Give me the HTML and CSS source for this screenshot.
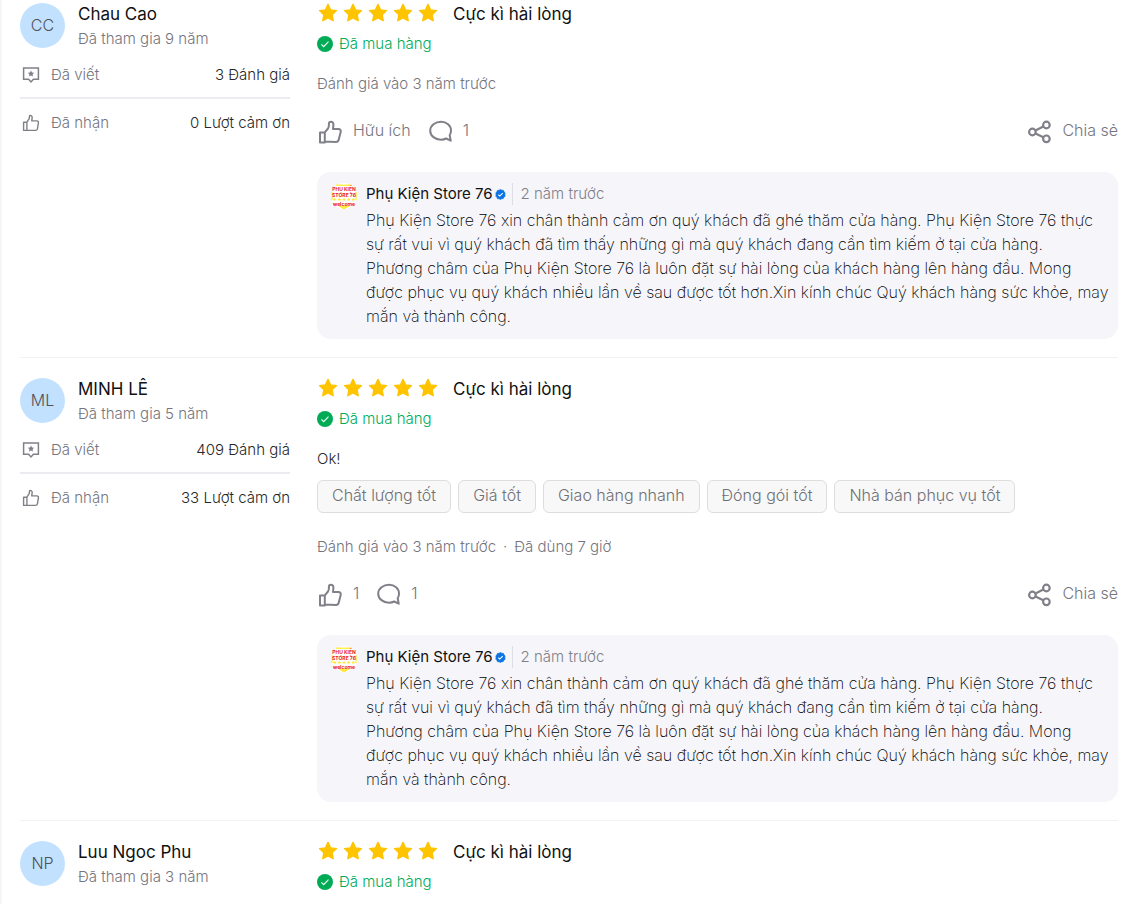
FILE: index.html
```
<!DOCTYPE html>
<html lang="vi">
<head>
    <meta charset="UTF-8">
    <meta name="viewport" content="width=device-width, initial-scale=1.0">
    <title>Đánh giá sản phẩm</title>
    <link rel="stylesheet" href="styles.css">
</head>
<body>
    <!-- Shared icons -->
    <svg class="sprite" aria-hidden="true">
        <symbol id="icon-star" viewBox="0 0 20 20">
            <path d="M10 1.4l2.5 5.5 6 .7-4.4 4.1 1.1 6-5.2-2.9-5.2 2.9 1.1-6-4.4-4.1 6-.7z" fill="#ffc400" stroke="#ffc400" stroke-width="1.4" stroke-linejoin="round"/>
        </symbol>
        <symbol id="icon-bought" viewBox="0 0 16 16">
            <circle cx="8" cy="8" r="8" fill="#00ab56"/>
            <path d="M4.4 8.4l2.3 2.2 4.8-5" fill="none" stroke="#fff" stroke-width="1.1"/>
        </symbol>
        <symbol id="icon-written" viewBox="0 0 18 18">
            <path d="M1.6 2.1h14.8v11.2h-5l-2.4 2.6-2.4-2.6h-5z" fill="none" stroke="#808089" stroke-width="1.5"/>
            <path d="M9 4.5l1 2 2.2.3-1.6 1.5.4 2.3L9 9.5l-2 1.1.4-2.3-1.6-1.5 2.2-.3z" fill="#808089"/>
        </symbol>
        <symbol id="icon-thanks" viewBox="0 0 18 18">
            <path d="M1.6 8.2h3.3v8.2H1.6zM4.9 8.2l2.3-3.5.4-3.1c1.6-.4 2.7.7 2.6 2.1l-.5 3.2h5.2c1.1 0 1.7.9 1.5 1.9l-1 6c-.2 1-.8 1.6-1.8 1.6H4.9" fill="none" stroke="#808089" stroke-width="1.4" stroke-linejoin="round"/>
        </symbol>
        <symbol id="icon-like" viewBox="0 0 27 27">
            <path d="M3 14.4h4.8v10H3zM7.8 14.4l3.2-3.9c.7-.9.9-1.9.9-3.3V5.8c0-1.3.9-2 2-2 1.7 0 2.7 1.4 2.5 3.2L16 11h5.5c1.7 0 2.6 1.2 2.2 2.9l-2 7.9c-.4 1.5-1.3 2.3-2.9 2.2l-11-.4" fill="none" stroke="#808089" stroke-width="2" stroke-linejoin="round"/>
        </symbol>
        <symbol id="icon-comment" viewBox="0 0 27 27">
            <path d="M22.7 17.3A9 9 0 0 0 24 12.7C24 7.5 19.6 3.8 14 3.8S3.2 7.5 3.2 12.7 8.3 21.7 14 21.7c2 0 3.7-.4 5.2-1.2l4.5 2.2z" fill="none" stroke="#808089" stroke-width="2" stroke-linejoin="round"/>
        </symbol>
        <symbol id="icon-share" viewBox="0 0 27 27">
            <g fill="none" stroke="#808089" stroke-width="2.2">
                <circle cx="6.4" cy="14" r="3.3"/>
                <circle cx="20.4" cy="7" r="3.3"/>
                <circle cx="20.4" cy="20.8" r="3.3"/>
                <path d="M9.5 12.4l7.8-3.8M9.5 15.6l7.8 3.7"/>
            </g>
        </symbol>
        <symbol id="icon-verified" viewBox="0 0 12 12">
            <path d="M6 .6l1.5.8 1.7.1.7 1.6 1.1 1.3-.3 1.7.3 1.7-1.3 1.1-.7 1.5-1.7.2-1.3.9-1.5-.8-1.8-.2-.6-1.5L.9 7.8l.3-1.7-.3-1.7L2 3.1l.7-1.6 1.7-.1z" fill="#0b74e5" stroke="#0b74e5" stroke-width=".8" stroke-linejoin="round"/>
            <path d="M3.7 6.3l1.5 1.4L8.4 4.6" fill="none" stroke="#fff" stroke-width="1.2"/>
        </symbol>
        <symbol id="logo-store" viewBox="0 0 26 26">
            <circle cx="13" cy="13" r="13" fill="#fff"/>
            <path d="M5 2.3h16M1 9v8M25 9v8" stroke="#fff04a" stroke-width="1.4"/>
            <path d="M2.5 17l1.3-1.5L5.1 17zM7 17l1.3-1.5L9.6 17zM11.7 17l1.3-1.5 1.3 1.5zM16.4 17l1.3-1.5L19 17zM20.9 17l1.3-1.5 1.3 1.5zM8 23h10l-5 3z" fill="#ffe93b" stroke="#ffe93b"/>
            <g class="logo-text">
                <text x="13" y="7.5">PHỤ KIỆN</text>
                <text x="13" y="14">STORE 76</text>
                <text x="13" y="22.5">welcome</text>
            </g>
        </symbol>
    </svg>

    <main class="reviews">
        <article class="review">
            <aside class="reviewer">
                <div class="reviewer-head">
                    <div class="avatar">CC</div>
                    <div>
                        <div class="reviewer-name">Chau Cao</div>
                        <div class="reviewer-date">Đã tham gia 9 năm</div>
                    </div>
                </div>
                <div class="reviewer-info">
                    <svg class="info-icon"><use href="#icon-written"/></svg>
                    <span>Đã viết</span>
                    <span class="info-value">3 Đánh giá</span>
                </div>
                <div class="reviewer-info">
                    <svg class="info-icon"><use href="#icon-thanks"/></svg>
                    <span>Đã nhận</span>
                    <span class="info-value">0 Lượt cảm ơn</span>
                </div>
            </aside>
            <div class="review-body">
                <div class="rating">
                    <div class="stars" role="img" aria-label="5 sao">
                        <svg><use href="#icon-star"/></svg>
                        <svg><use href="#icon-star"/></svg>
                        <svg><use href="#icon-star"/></svg>
                        <svg><use href="#icon-star"/></svg>
                        <svg><use href="#icon-star"/></svg>
                    </div>
                    <div class="rating-title">Cực kì hài lòng</div>
                </div>
                <div class="bought"><svg><use href="#icon-bought"/></svg>Đã mua hàng</div>
                <div class="created">Đánh giá vào 3 năm trước</div>
                <div class="actions">
                    <button type="button" class="action"><svg><use href="#icon-like"/></svg>Hữu ích</button>
                    <button type="button" class="action"><svg><use href="#icon-comment"/></svg>1</button>
                    <button type="button" class="action share"><svg><use href="#icon-share"/></svg>Chia sẻ</button>
                </div>
                <div class="reply">
                    <svg class="store-logo"><use href="#logo-store"/></svg>
                    <div class="reply-main">
                        <div class="reply-head">
                            <span class="store-name">Phụ Kiện Store 76</span>
                            <svg class="verified"><use href="#icon-verified"/></svg>
                            <span class="reply-date">2 năm trước</span>
                        </div>
                        <p class="reply-text">Phụ Kiện Store 76 xin chân thành cảm ơn quý khách đã ghé thăm cửa hàng. Phụ Kiện Store 76 thực sự rất vui vì quý khách đã tìm thấy những gì mà quý khách đang cần tìm kiếm ở tại cửa hàng.<br>Phương châm của Phụ Kiện Store 76 là luôn đặt sự hài lòng của khách hàng lên hàng đầu. Mong được phục vụ quý khách nhiều lần về sau được tốt hơn.Xin kính chúc Quý khách hàng sức khỏe, may mắn và thành công.</p>
                    </div>
                </div>
            </div>
        </article>

        <article class="review">
            <aside class="reviewer">
                <div class="reviewer-head">
                    <div class="avatar">ML</div>
                    <div>
                        <div class="reviewer-name">MINH LÊ</div>
                        <div class="reviewer-date">Đã tham gia 5 năm</div>
                    </div>
                </div>
                <div class="reviewer-info">
                    <svg class="info-icon"><use href="#icon-written"/></svg>
                    <span>Đã viết</span>
                    <span class="info-value">409 Đánh giá</span>
                </div>
                <div class="reviewer-info">
                    <svg class="info-icon"><use href="#icon-thanks"/></svg>
                    <span>Đã nhận</span>
                    <span class="info-value">33 Lượt cảm ơn</span>
                </div>
            </aside>
            <div class="review-body">
                <div class="rating">
                    <div class="stars" role="img" aria-label="5 sao">
                        <svg><use href="#icon-star"/></svg>
                        <svg><use href="#icon-star"/></svg>
                        <svg><use href="#icon-star"/></svg>
                        <svg><use href="#icon-star"/></svg>
                        <svg><use href="#icon-star"/></svg>
                    </div>
                    <div class="rating-title">Cực kì hài lòng</div>
                </div>
                <div class="bought"><svg><use href="#icon-bought"/></svg>Đã mua hàng</div>
                <p class="content">Ok!</p>
                <div class="tags">
                    <span class="tag">Chất lượng tốt</span>
                    <span class="tag">Giá tốt</span>
                    <span class="tag">Giao hàng nhanh</span>
                    <span class="tag">Đóng gói tốt</span>
                    <span class="tag">Nhà bán phục vụ tốt</span>
                </div>
                <div class="created">Đánh giá vào 3 năm trước<span class="dot">·</span>Đã dùng 7 giờ</div>
                <div class="actions">
                    <button type="button" class="action"><svg><use href="#icon-like"/></svg>1</button>
                    <button type="button" class="action"><svg><use href="#icon-comment"/></svg>1</button>
                    <button type="button" class="action share"><svg><use href="#icon-share"/></svg>Chia sẻ</button>
                </div>
                <div class="reply">
                    <svg class="store-logo"><use href="#logo-store"/></svg>
                    <div class="reply-main">
                        <div class="reply-head">
                            <span class="store-name">Phụ Kiện Store 76</span>
                            <svg class="verified"><use href="#icon-verified"/></svg>
                            <span class="reply-date">2 năm trước</span>
                        </div>
                        <p class="reply-text">Phụ Kiện Store 76 xin chân thành cảm ơn quý khách đã ghé thăm cửa hàng. Phụ Kiện Store 76 thực sự rất vui vì quý khách đã tìm thấy những gì mà quý khách đang cần tìm kiếm ở tại cửa hàng.<br>Phương châm của Phụ Kiện Store 76 là luôn đặt sự hài lòng của khách hàng lên hàng đầu. Mong được phục vụ quý khách nhiều lần về sau được tốt hơn.Xin kính chúc Quý khách hàng sức khỏe, may mắn và thành công.</p>
                    </div>
                </div>
            </div>
        </article>

        <article class="review">
            <aside class="reviewer">
                <div class="reviewer-head">
                    <div class="avatar">NP</div>
                    <div>
                        <div class="reviewer-name">Luu Ngoc Phu</div>
                        <div class="reviewer-date">Đã tham gia 3 năm</div>
                    </div>
                </div>
            </aside>
            <div class="review-body">
                <div class="rating">
                    <div class="stars" role="img" aria-label="5 sao">
                        <svg><use href="#icon-star"/></svg>
                        <svg><use href="#icon-star"/></svg>
                        <svg><use href="#icon-star"/></svg>
                        <svg><use href="#icon-star"/></svg>
                        <svg><use href="#icon-star"/></svg>
                    </div>
                    <div class="rating-title">Cực kì hài lòng</div>
                </div>
                <div class="bought"><svg><use href="#icon-bought"/></svg>Đã mua hàng</div>
            </div>
        </article>
    </main>
</body>
</html>
```
FILE: styles.css
```
* {
    box-sizing: border-box;
}
body {
    margin: 0;
    font-family: Inter, "Liberation Sans", sans-serif;
    font-size: 15px;
    font-weight: 300;
    line-height: 24px;
    color: #27272a;
    background: #fff;
}
p {
    margin: 0;
}
svg {
    display: block;
    flex-shrink: 0;
}
.sprite {
    display: none;
}
.reviews {
    min-height: 100vh;
    padding: 2px 17px 0 18px;
    border-left: 2px solid #f5f5fa;
}
.review {
    display: grid;
    grid-template-columns: 270px 1fr;
    column-gap: 27px;
    padding-bottom: 18px;
}
.review + .review {
    padding-top: 19px;
    border-top: 1px solid #f2f2f2;
}
.review:last-child {
    padding-bottom: 0;
}

/* Reviewer column */
.reviewer-head {
    display: flex;
    gap: 13px;
    margin-bottom: 12px;
}
.avatar {
    display: flex;
    align-items: center;
    justify-content: center;
    width: 45px;
    height: 45px;
    margin-top: 1px;
    padding-bottom: 2px;
    border-radius: 50%;
    background: #c2e1ff;
    font-size: 16px;
    color: #515158;
}
.reviewer-name {
    margin-bottom: 1px;
    font-size: 17px;
    font-weight: 400;
    color: #111;
}
.reviewer-date {
    color: #75757e;
}
.reviewer-info {
    display: flex;
    align-items: center;
    color: #75757e;
}
.reviewer-info + .reviewer-info {
    margin-top: 10px;
    padding-top: 12px;
    border-top: 2px solid #ebebf0;
}
.info-icon {
    width: 18px;
    height: 18px;
    margin: 0 11px 0 2px;
}
.info-value {
    margin-left: auto;
    color: #27272a;
}

/* Review column */
.rating {
    display: flex;
    align-items: center;
    gap: 15px;
}
.stars {
    display: flex;
    gap: 5px;
    padding: 0 0 2px 1px;
}
.stars svg {
    width: 20px;
    height: 20px;
}
.rating-title {
    font-size: 17px;
    font-weight: 400;
    color: #111;
}
.bought {
    display: flex;
    align-items: center;
    gap: 6px;
    margin-top: 6px;
    color: #00ab56;
}
.bought svg {
    width: 16px;
    height: 16px;
}
.content {
    margin-top: 16px;
}
.tags {
    display: flex;
    flex-wrap: wrap;
    gap: 7px;
    margin: 9px 0 6px;
}
.tag {
    padding: 2px 14px 5px;
    border: 1px solid #ddd;
    border-radius: 6px;
    background: #f8f8f8;
    font-size: 16px;
    color: #707075;
}
.created {
    margin-top: 16px;
    color: #75757e;
}
.content ~ .created {
    margin-top: 22px;
}
.dot {
    margin: 0 7px;
}
.actions {
    display: flex;
    gap: 16px;
    margin: 22px 0 27px;
}
.action {
    display: flex;
    align-items: flex-start;
    gap: 9px;
    padding: 0;
    border: 0;
    background: none;
    font: inherit;
    font-size: 16px;
    line-height: 24px;
    color: #75757e;
    cursor: pointer;
}
.action svg {
    width: 27px;
    height: 27px;
}
.share {
    margin-left: auto;
}

/* Store reply */
.reply {
    display: flex;
    gap: 9px;
    padding: 10px 8px 11px 14px;
    border-radius: 14px;
    background: #f5f5fa;
}
.store-logo {
    width: 26px;
    height: 26px;
    margin-top: 1px;
}
.logo-text {
    font-size: 5px;
    font-weight: 700;
    text-anchor: middle;
    fill: #e8202a;
}
.reply-main {
    flex: 1;
}
.reply-head {
    display: flex;
    align-items: center;
}
.store-name {
    font-weight: 400;
    color: #111;
}
.verified {
    width: 11px;
    height: 11px;
    margin: 0 6px 0 2px;
}
.reply-date {
    padding-left: 8px;
    border-left: 1px solid #dddde3;
    line-height: 22px;
    color: #808089;
}
.reply-text {
    margin-top: 2px;
    font-size: 16px;
    font-weight: 200;
    color: #000;
}
```
